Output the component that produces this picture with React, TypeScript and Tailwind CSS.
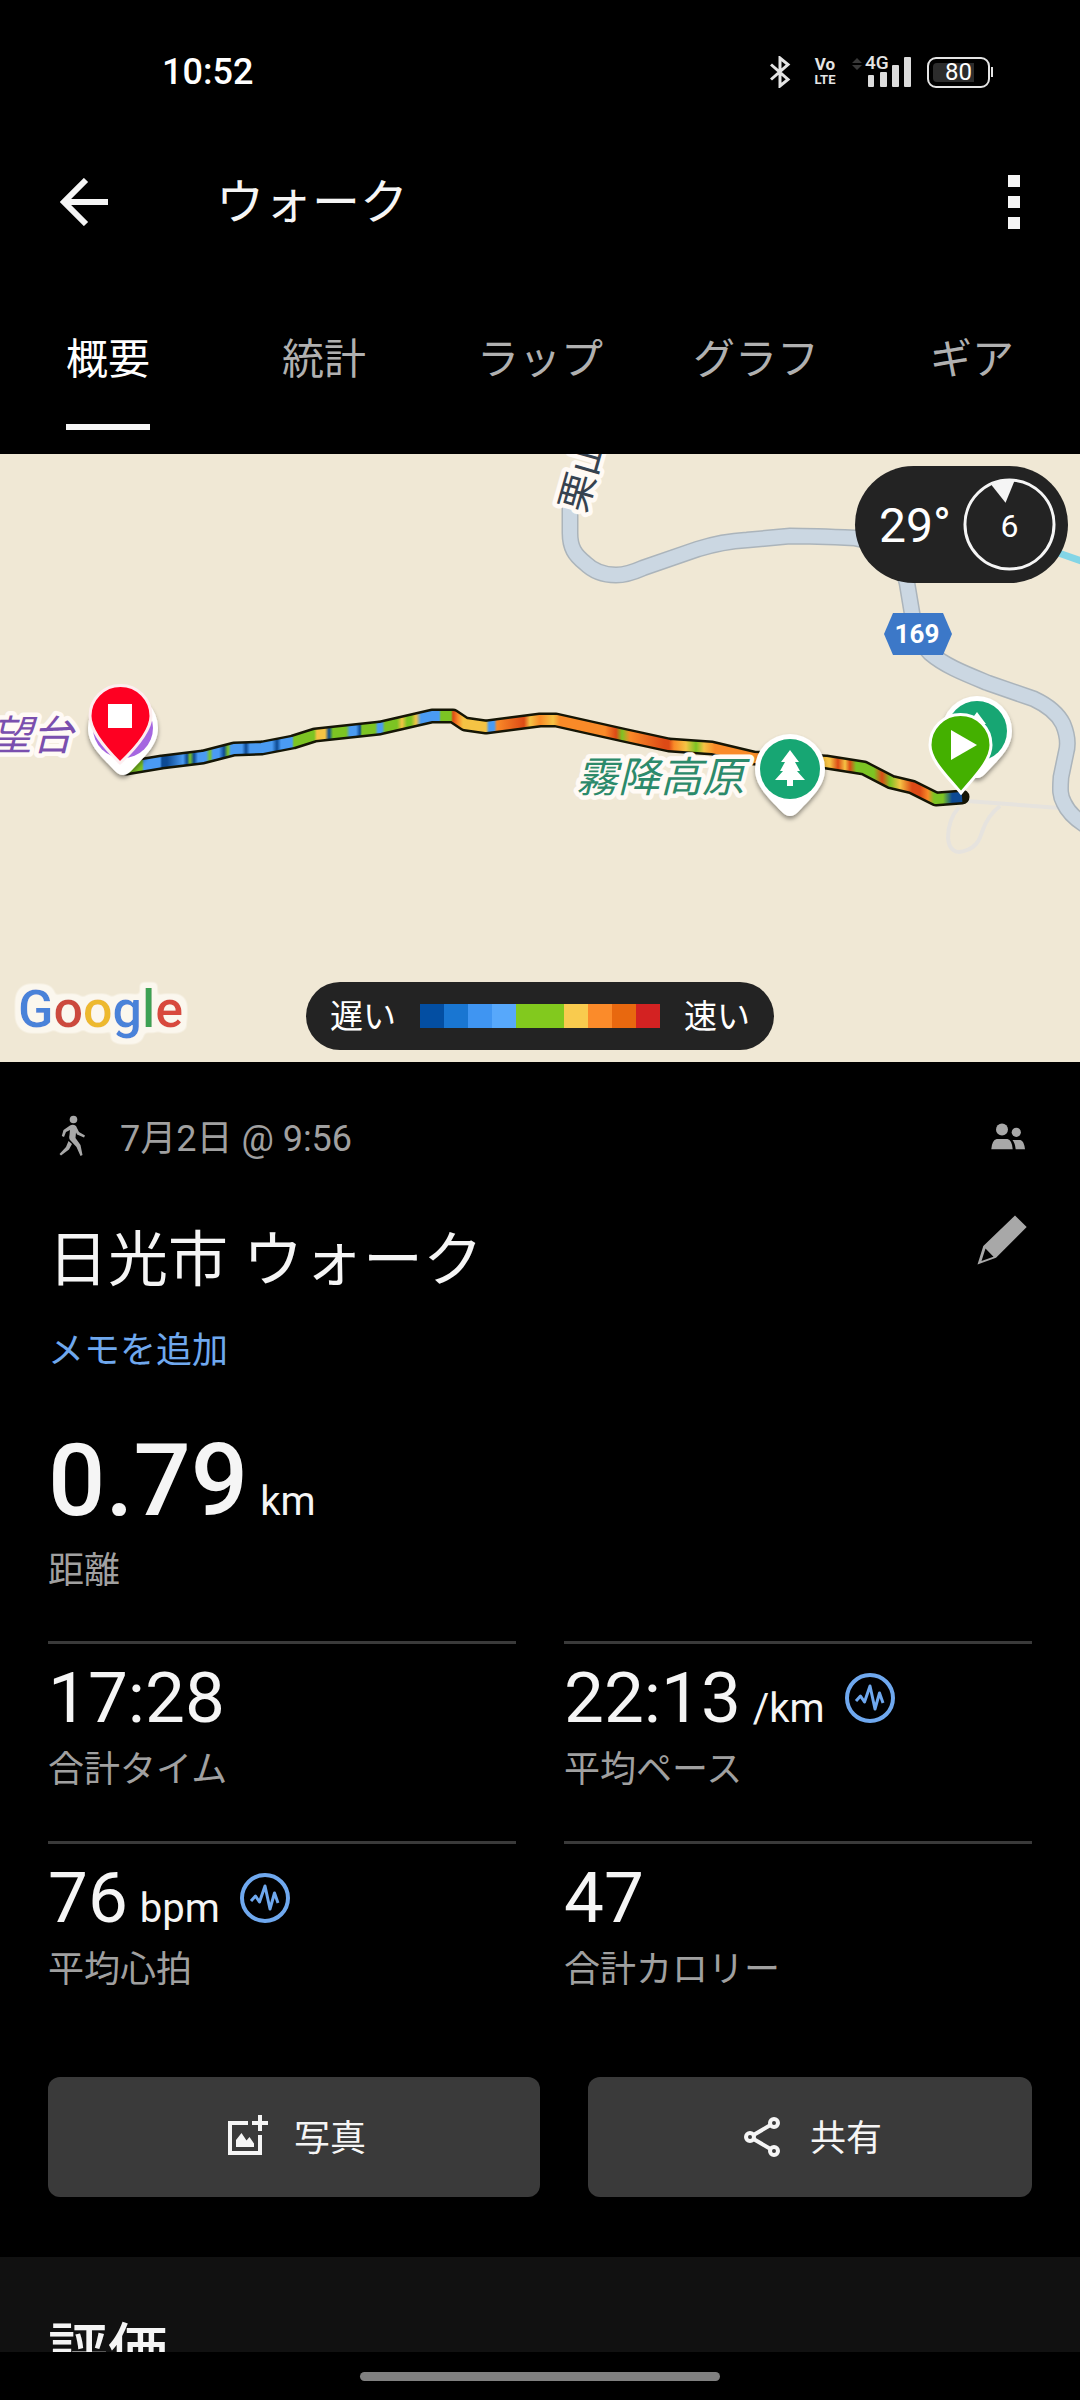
import React from "react";

const TABS = ["概要", "統計", "ラップ", "グラフ", "ギア"];

const PACE_COLORS = [
  "bg-[#034ea2]",
  "bg-[#1976d2]",
  "bg-[#3f95f2]",
  "bg-[#57a8fb]",
  "bg-[#82c91e]",
  "bg-[#82c91e]",
  "bg-[#f9cb4e]",
  "bg-[#fb8b2a]",
  "bg-[#e8680f]",
  "bg-[#d32222]",
];

const NAVY = "#0d4a94";
const BLUE = "#4a9bf3";
const GREEN = "#7cc423";
const YELLOW = "#f5c344";
const ORANGE = "#f98a28";
const RED = "#dd4a16";

const ROUTE_START = 138;
const ROUTE_END = 964;

/* Pace colour along the route, keyed by horizontal position. */
const ROUTE_STOPS: [number, string][] = [
  [138, GREEN], [142, GREEN], [144, BLUE], [160, BLUE], [162, NAVY], [167, NAVY], [183, BLUE],
  [187, NAVY], [190, GREEN], [194, NAVY], [198, BLUE], [206, BLUE], [210, GREEN], [213, BLUE],
  [219, BLUE], [224, NAVY], [228, GREEN], [231, BLUE], [242, BLUE], [246, NAVY], [250, BLUE],
  [272, BLUE], [277, NAVY], [281, BLUE], [292, BLUE], [294, GREEN], [314, GREEN], [317, YELLOW],
  [325, YELLOW], [329, NAVY], [333, GREEN], [346, GREEN], [350, BLUE], [356, BLUE], [360, NAVY],
  [362, GREEN], [375, GREEN], [378, BLUE], [382, BLUE], [385, GREEN], [397, GREEN], [402, YELLOW],
  [407, GREEN], [411, GREEN], [416, YELLOW], [421, BLUE], [439, BLUE], [441, GREEN], [451, GREEN],
  [453, RED], [458, ORANGE], [463, YELLOW], [486, YELLOW], [489, BLUE], [494, BLUE], [497, ORANGE],
  [524, RED], [530, YELLOW], [540, ORANGE], [553, YELLOW], [560, ORANGE], [605, ORANGE],
  [616, RED], [622, GREEN], [630, ORANGE], [664, RED], [669, RED], [674, ORANGE], [686, YELLOW],
  [696, GREEN], [704, YELLOW], [715, ORANGE], [752, ORANGE], [830, YELLOW], [838, RED],
  [845, YELLOW], [850, RED], [856, GREEN], [874, GREEN], [882, RED], [890, GREEN], [900, YELLOW],
  [912, RED], [920, RED], [928, ORANGE], [934, GREEN], [943, GREEN], [952, NAVY], [964, NAVY],
];

const ROUTE_POINTS =
  "126,768 138,766 162,762 203,757 234,749 262,748 293,742 315,735 380,728 432,716 453,716 465,724 486,727 540,720 556,720 623,735 669,745 712,748 754,758 826,762 864,768 891,782 912,787 936,799 962,797";

const ROAD_PATH =
  "M570 500 V533 C570 548 575 555 585 563 C594 572 604 575 616 575 C626 575 634 572 643 568 L698 549 C714 544 730 541 747 540 L790 536 C812 536 834 537 855 538 C885 543 901 555 907 583 L912 613 C915 632 920 643 930 653 C945 666 966 674 988 683 L1034 699 C1049 706 1058 714 1063 724 C1068 736 1068 746 1066 753 L1061 777 C1060 790 1060 796 1064 803 C1068 812 1076 820 1090 828";

function StatusBar() {
  return (
    <div className="flex h-36 shrink-0 items-center justify-between pr-[87px] pl-[162px]">
      <time className="text-4xl leading-[48px] font-medium text-white">10:52</time>
      <div className="flex items-center gap-[23px]">
        <svg className="h-8 w-[22px]" viewBox="0 0 22 32" fill="none" stroke="#e4e4e4" strokeWidth="3" aria-label="Bluetooth">
          <path d="M2 8.500 19 23.500 11 30 V2 L19 8.500 2 23.500" />
        </svg>
        <div className="flex w-[22px] flex-col items-center text-[17px] leading-[16px] font-bold text-[#e4e4e4]">
          <span>Vo</span>
          <span className="text-[13px]">LTE</span>
        </div>
        <div className="relative -ml-[7px] h-8 w-[60px]">
          <svg className="h-8 w-[60px]" viewBox="0 0 60 32" aria-label="信号強度">
            <path d="M0 7 5 2 10 7Z M0 9 5 14 10 9Z" fill="#383838" />
            <g fill="#dcdcdc">
              <rect x="16" y="19" width="6" height="12" rx="1" />
              <rect x="28" y="16" width="7" height="15" rx="1" />
              <rect x="40" y="9" width="7" height="22" rx="1" />
              <rect x="52" y="1" width="7" height="30" rx="1" />
            </g>
          </svg>
          <span className="absolute -top-0.5 left-[13px] text-[19px] leading-[18px] font-medium text-[#e4e4e4]">4G</span>
        </div>
        <div className="-ml-2 flex items-center gap-px">
          <div className="flex h-[31px] w-[63px] items-center justify-center rounded-[9px] border-2 border-[#e4e4e4] p-1">
            <div className="flex h-full w-full items-center justify-center rounded-sm bg-linear-to-r from-[#2c2c2c] from-80% to-black to-80% text-2xl leading-none text-white">
              80
            </div>
          </div>
          <div className="h-2.5 w-0.5 bg-[#e4e4e4]" />
        </div>
      </div>
    </div>
  );
}

function AppBar() {
  return (
    <header className="flex h-[116px] shrink-0 items-center px-[60px]">
      <button type="button" aria-label="戻る">
        <svg className="block size-12" viewBox="0 0 48 48" fill="none" stroke="#f5f5f5" strokeWidth="6">
          <path d="M4 24H48M26 2 4 24 26 46" />
        </svg>
      </button>
      <h1 className="ml-[108px] flex-1 pt-0.5 text-5xl leading-[60px] text-[#f5f5f5]">ウォーク</h1>
      <button type="button" aria-label="メニュー" className="flex flex-col gap-[9px]">
        <span className="size-3 bg-[#f5f5f5]" />
        <span className="size-3 bg-[#f5f5f5]" />
        <span className="size-3 bg-[#f5f5f5]" />
      </button>
    </header>
  );
}

function Tabs() {
  return (
    <div role="tablist" className="grid shrink-0 grid-cols-5 pt-[70px] pb-6 text-[42px] leading-[60px]">
      {TABS.map((tab, i) => (
        <button key={tab} type="button" role="tab" aria-selected={i === 0} className="flex justify-center">
          <span
            className={
              i === 0
                ? "border-b-[6px] border-[#f5f5f5] pb-[34px] text-white"
                : "border-b-[6px] border-transparent pb-[34px] text-[#b0b0b0]"
            }
          >
            {tab}
          </span>
        </button>
      ))}
    </div>
  );
}

function TreePin({ x, y }: { x: number; y: number }) {
  return (
    <g transform={`translate(${x} ${y})`}>
      <g filter="url(#pinShadow)">
        <path d="M-35 0 A35 35 0 1 1 35 0 C35 17 22 28 9 42 Q0 52 -9 42 C-22 28 -35 17 -35 0Z" fill="#fff" />
      </g>
      <circle r="30" fill="#17a673" />
      <path d="M0 -19 9 -7 H5 L10 2 H7 L15 11 H3 V17 H-3 V11 H-15 L-7 2 H-10 L-5 -7 H-9Z" fill="#fff" />
    </g>
  );
}

function RouteMap() {
  return (
    <section aria-label="地図" className="relative h-[608px] shrink-0 overflow-hidden bg-[#f0e8d5]">
      <svg className="h-full w-full" viewBox="0 454 1080 608" preserveAspectRatio="xMidYMid slice">
        <defs>
          <linearGradient id="pace" gradientUnits="userSpaceOnUse" x1={ROUTE_START} x2={ROUTE_END} y1="0" y2="0">
            {ROUTE_STOPS.map(([x, color], i) => (
              <stop key={i} offset={(x - ROUTE_START) / (ROUTE_END - ROUTE_START)} stopColor={color} />
            ))}
          </linearGradient>
          <filter id="pinShadow" x="-30%" y="-30%" width="160%" height="160%">
            <feDropShadow dx="0" dy="3" stdDeviation="2" floodColor="#000" floodOpacity="0.4" />
          </filter>
          <filter id="halo" x="-10%" y="-30%" width="120%" height="160%">
            <feMorphology in="SourceAlpha" operator="dilate" radius="5" result="grown" />
            <feGaussianBlur in="grown" stdDeviation="2" result="soft" />
            <feComponentTransfer in="soft" result="edge">
              <feFuncA type="linear" slope="3" intercept="-0.6" />
            </feComponentTransfer>
            <feFlood floodColor="#fbf7ee" />
            <feComposite in2="edge" operator="in" result="glow" />
            <feMerge>
              <feMergeNode in="glow" />
              <feMergeNode in="SourceGraphic" />
            </feMerge>
          </filter>
        </defs>

        <path d="M1050 550 L1090 564" stroke="#83d5e6" strokeWidth="7" fill="none" />
        <path
          d="M967 801 L1060 808 M1000 806 C992 812 986 820 982 832 C979 842 975 847 967 850 C956 855 949 850 948 838 C948 826 952 815 959 807"
          stroke="#e6e3de"
          strokeWidth="4"
          fill="none"
        />
        <g fill="none">
          <path d={ROAD_PATH} stroke="#abb4bb" strokeWidth="17" />
          <path d={ROAD_PATH} stroke="#cbd7e2" strokeWidth="14" />
        </g>

        <g strokeLinejoin="round" fill="none">
          <polyline points={ROUTE_POINTS} stroke="#151505" strokeWidth="15" strokeLinecap="round" />
          <polyline points={ROUTE_POINTS} stroke="url(#pace)" strokeWidth="10" />
        </g>

        <g stroke="#fffaf5" strokeWidth="9" strokeLinejoin="round" style={{ paintOrder: "stroke" }}>
          <text transform="translate(585 514) rotate(-74)" fontSize="38" fill="#36424f">
            栗山
          </text>
          <text x="-9" y="750" fontSize="41" fontStyle="italic" fill="#7a4fae">
            望台
          </text>
          <text x="576" y="792" fontSize="42" fontStyle="italic" fill="#2c8a6b">
            霧降高原
          </text>
        </g>

        <path d="M893 613H943L952 634 943 655H893L884 634Z" fill="#3c78c8" />
        <text x="917" y="643" fontSize="26" fontWeight="700" fill="#fff" textAnchor="middle">
          169
        </text>

        <g transform="translate(123 728)">
          <g filter="url(#pinShadow)">
            <path d="M-35 0 A35 35 0 1 1 35 0 C35 17 22 28 9 42 Q0 52 -9 42 C-22 28 -35 17 -35 0Z" fill="#fff" />
          </g>
          <circle r="30" fill="#a566e0" />
        </g>
        <path
          d="M90 716 A30.500 30.500 0 1 1 151 716 C151 730 138 746 120 763 C103 746 90 730 90 716Z"
          fill="#fe0022"
          stroke="#fdeef0"
          strokeWidth="3"
        />
        <rect x="108" y="704" width="24" height="24" fill="#fff" />

        <TreePin x={790} y={769} />
        <TreePin x={977} y={731} />
        <path
          d="M930 745 A30.500 30.500 0 1 1 991 745 C991 760 976 775 961 793 C946 775 930 760 930 745Z"
          fill="#44b000"
          stroke="#fff"
          strokeWidth="3"
        />
        <path d="M951 730 977 745 951 760Z" fill="#fff" />

        <text x="18" y="1027" fontSize="52" fontWeight="500" filter="url(#halo)">
          <tspan fill="#4a82d9">G</tspan>
          <tspan fill="#cc4a3e">o</tspan>
          <tspan fill="#edb92e">o</tspan>
          <tspan fill="#4a82d9">g</tspan>
          <tspan fill="#3da152">l</tspan>
          <tspan fill="#d8483c">e</tspan>
        </text>
      </svg>

      <div className="absolute top-3 right-3 flex h-[117px] items-center gap-3 rounded-full bg-[#232323] pr-3 pl-6 text-white">
        <span className="pt-0.5 text-5xl leading-[60px]">29°</span>
        <span className="relative flex size-[93px] items-center justify-center pt-0.5 text-[32px] leading-10">
          <svg className="absolute inset-0 size-full" viewBox="0 0 94 94">
            <circle cx="47" cy="47" r="45" fill="none" stroke="#f5f5f5" strokeWidth="3" />
            <path d="M28 6 Q40 1 52 3 L43 25Z" fill="#f5f5f5" />
          </svg>
          6
        </span>
      </div>

      <div className="absolute bottom-3 left-1/2 flex h-[68px] -translate-x-1/2 items-center gap-6 rounded-full bg-[#232323] px-6 text-[33px] leading-10 whitespace-nowrap text-white">
        <span className="pt-0.5">遅い</span>
        <span className="flex">
          {PACE_COLORS.map((color, i) => (
            <span key={i} className={`size-6 ${color}`} />
          ))}
        </span>
        <span className="pt-0.5">速い</span>
      </div>
    </section>
  );
}

function PulseIcon() {
  return (
    <svg className="size-[50px] shrink-0" viewBox="0 0 50 50" fill="none" stroke="#6fa8ee" aria-label="詳細">
      <circle cx="25" cy="25" r="23" strokeWidth="4" />
      <path d="M11 28 15.500 23 19.500 29 25 13 30 36 34.500 20 38 30" strokeWidth="3" strokeLinejoin="round" />
    </svg>
  );
}

type StatProps = { label: string; value: string; unit?: string; pulse?: boolean };

function Stat({ label, value, unit, pulse }: StatProps) {
  return (
    <div className="flex flex-col border-t-[3px] border-[#3a3a3a] pt-3 pb-[47px]">
      <dt className="order-2 mt-1.5 text-4xl leading-[48px] text-[#a0a0a0]">{label}</dt>
      <dd className="order-1 flex items-center gap-5 text-[71px] leading-[84px] text-[#f5f5f5]">
        <span className="flex items-baseline gap-3">
          {value}
          {unit && <span className="text-[40px] leading-none">{unit}</span>}
        </span>
        {pulse && <PulseIcon />}
      </dd>
    </div>
  );
}

function Summary() {
  return (
    <section className="shrink-0 px-12 pt-[53px] pb-[60px]">
      <div className="flex items-center gap-6 text-4xl leading-[48px] text-[#a0a0a0]">
        <svg className="size-12" viewBox="0 0 48 48" fill="#a8a8a8" aria-label="ウォーク">
          <circle cx="25.500" cy="4.500" r="3.800" />
          <path d="M22 10.500 Q25 9 28 11 L31 17 37 20.500 36 22.500 29 19.500 28 17.500 27.500 23 32.500 30 34.500 40 32.500 41 28.500 32 22.500 25.500 Q20.500 23.500 21.500 20 L22 15 18 17 16 22 13.800 21 15.500 15Z" />
          <path d="M20.500 26 24 29 21 34.500 13 40.500 11.500 39 18 32Z" />
        </svg>
        <p className="flex-1">7月2日 @ 9:56</p>
        <svg className="size-12" viewBox="0 0 48 48" fill="#a8a8a8" aria-label="公開範囲">
          <circle cx="18" cy="14.500" r="6" />
          <circle cx="32.300" cy="17.300" r="4.600" />
          <path d="M7.300 34.300 Q8 25 12.700 24 H23.500 Q28 25 28.700 34.300Z M28.500 25 H36.500 Q40 26 41 34.300 H31.700 Q31 28 28.500 25Z" />
        </svg>
      </div>

      <div className="mt-12 flex items-start justify-between">
        <h2 className="mt-3.5 text-6xl leading-[72px] text-[#f5f5f5]">日光市 ウォーク</h2>
        <button type="button" aria-label="編集">
          <svg className="block size-[60px]" viewBox="0 0 60 60" fill="#a8a8a8" fillRule="evenodd">
            <path d="M5.500 53.500 11.300 35 43 4.500 54.700 16 24 46.700Z M13.500 37.500 9.500 50 21.500 45.800Z" />
          </svg>
        </button>
      </div>
      <button type="button" className="mt-[30px] block text-4xl leading-[48px] text-[#6fa8ee]">
        メモを追加
      </button>

      <dl>
        <div className="mt-[46px] mb-[46px] flex flex-col">
          <dt className="order-2 mt-1.5 text-4xl leading-[48px] text-[#a0a0a0]">距離</dt>
          <dd className="order-1 flex items-baseline gap-3 text-[101px] leading-[120px] font-medium text-[#f5f5f5]">
            0.79
            <span className="text-[40px] leading-none font-normal">km</span>
          </dd>
        </div>
        <div className="grid grid-cols-2 gap-x-12">
          <Stat label="合計タイム" value="17:28" />
          <Stat label="平均ペース" value="22:13" unit="/km" pulse />
          <Stat label="平均心拍" value="76" unit="bpm" pulse />
          <Stat label="合計カロリー" value="47" />
        </div>
      </dl>

      <div className="mt-9 grid grid-cols-[492fr_444fr] gap-12 text-4xl leading-[48px] text-[#f5f5f5]">
        <button type="button" className="flex h-[120px] items-center justify-center gap-6 rounded-xl bg-[#3a3a3a]">
          <svg className="size-12" viewBox="0 0 48 48" fill="#f5f5f5">
            <path d="M6 8H26V12H10V38H36V22H40V42H6Z" />
            <path d="M36 2H40V8H46V12H40V18H36V12H30V8H36Z" />
            <path d="M14 34V27L19.500 20 24.500 27.500 27.500 24 32 30.500V34Z" />
          </svg>
          <span className="pt-1">写真</span>
        </button>
        <button type="button" className="flex h-[120px] items-center justify-center gap-6 rounded-xl bg-[#3a3a3a]">
          <svg className="size-12" viewBox="0 0 48 48" fill="none" stroke="#f5f5f5" strokeWidth="4">
            <circle cx="12" cy="24" r="4" />
            <circle cx="36" cy="10" r="4" />
            <circle cx="36" cy="38" r="4" />
            <path d="M15.500 22 32.500 12M15.500 26 32.500 36" />
          </svg>
          <span className="pt-1">共有</span>
        </button>
      </div>
    </section>
  );
}

export default function App() {
  return (
    <div
      lang="ja"
      className="flex h-screen flex-col overflow-hidden bg-black font-[Roboto,'Noto_Sans_CJK_JP',sans-serif]"
    >
      <StatusBar />
      <AppBar />
      <Tabs />
      <main className="flex min-h-0 flex-1 flex-col overflow-hidden">
        <RouteMap />
        <Summary />
        <section className="shrink-0 bg-[#111111] px-12 py-[60px]">
          <h2 className="text-6xl leading-[72px] font-medium text-[#f5f5f5]">評価</h2>
        </section>
      </main>
      <footer className="flex h-12 shrink-0 items-center justify-center">
        <div className="h-[9px] w-1/3 rounded-full bg-[#808080]" />
      </footer>
    </div>
  );
}
